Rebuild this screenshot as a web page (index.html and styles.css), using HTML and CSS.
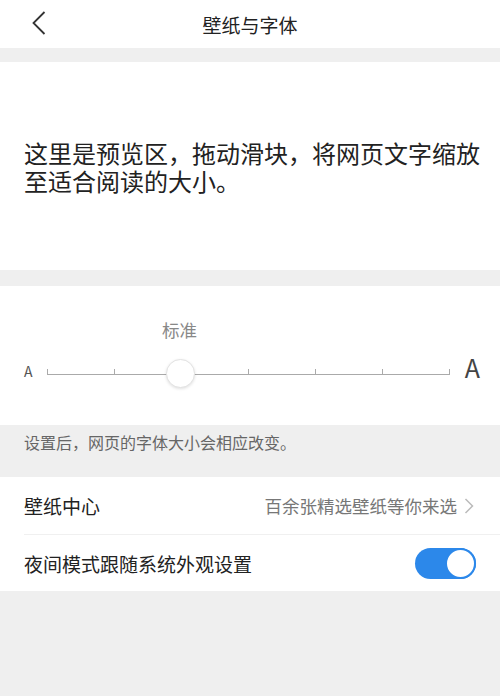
FILE: index.html
```html
<!DOCTYPE html>
<html lang="zh-CN">
<head>
    <meta charset="utf-8">
    <title>壁纸与字体</title>
    <link rel="stylesheet" href="styles.css">
</head>
<body>
    <div class="nav-bar">
        <span class="back">
            <svg width="14" height="24" viewBox="0 0 14 24"><path d="M12.5 1 L1.5 12 L12.5 23" fill="none" stroke="#333" stroke-width="1.8"/></svg>
        </span>
        <h1 class="nav-title">壁纸与字体</h1>
    </div>

    <div class="preview">
        <p>这里是预览区，拖动滑块，将网页文字缩放至适合阅读的大小。</p>
    </div>

    <div class="font-panel">
        <div class="level-label">标准</div>
        <div class="slider-row">
            <span class="a-small">A</span>
            <div class="track">
                <span class="tick"></span>
                <span class="tick"></span>
                <span class="tick"></span>
                <span class="tick"></span>
                <span class="tick"></span>
                <span class="tick"></span>
                <span class="tick"></span>
                <span class="thumb"></span>
            </div>
            <span class="a-big">A</span>
        </div>
    </div>

    <div class="hint">设置后，网页的字体大小会相应改变。</div>

    <div class="settings">
        <div class="row">
            <span class="row-title">壁纸中心</span>
            <span class="row-extra">百余张精选壁纸等你来选
                <svg width="10" height="16" viewBox="0 0 10 16"><path d="M1.5 1 L8.5 8 L1.5 15" fill="none" stroke="#bbb" stroke-width="1.5"/></svg>
            </span>
        </div>
        <div class="row">
            <span class="row-title">夜间模式跟随系统外观设置</span>
            <span class="switch on"><span class="knob"></span></span>
        </div>
    </div>
</body>
</html>
```

FILE: styles.css
```css
body {
    margin: 0;
    font-family: "Noto Sans CJK SC", "Noto Sans", sans-serif;
    background-color: #efefef;
    color: #222;
}

.nav-bar {
    height: 48px;
    background-color: #fff;
    display: flex;
    align-items: center;
    justify-content: center;
    position: relative;
    margin-bottom: 14px;
}

.back {
    position: absolute;
    left: 32px;
    top: 11px;
    display: flex;
}

.nav-title {
    margin: 0;
    font-size: 19px;
    font-weight: normal;
    color: #222;
}

.preview {
    background-color: #fff;
    height: 208px;
    padding: 77px 0 0 24px;
    box-sizing: border-box;
    margin-bottom: 16px;
}

.preview p {
    margin: 0;
    width: 462px;
    font-size: 24px;
    line-height: 28px;
    color: #222;
}

.font-panel {
    background-color: #fff;
    height: 139px;
    padding-top: 31px;
    box-sizing: border-box;
}

.level-label {
    margin-left: 162px;
    font-size: 17.5px;
    line-height: 26px;
    color: #888;
}

.slider-row {
    display: flex;
    align-items: center;
    padding: 0 20px 0 24px;
    margin-top: 7px;
    height: 40px;
}

.a-small {
    font-size: 14px;
    color: #555;
    width: 23px;
    margin-top: 2px;
}

.a-big {
    font-size: 25px;
    color: #444;
    margin-left: 15px;
    margin-top: -6px;
}

.track {
    flex: 1;
    height: 1px;
    background-color: #aaa;
    position: relative;
    display: flex;
    justify-content: space-between;
    margin-top: 9px;
}

.tick {
    width: 1px;
    height: 6px;
    background-color: #aaa;
    margin-top: -5px;
}

.thumb {
    position: absolute;
    left: 119px;
    top: -15px;
    width: 27px;
    height: 27px;
    border-radius: 50%;
    background-color: #fff;
    border: 1px solid #e2e2e2;
    box-shadow: 0 1px 3px rgba(0, 0, 0, 0.12);
}

.hint {
    height: 52px;
    padding: 5px 24px 0;
    box-sizing: border-box;
    font-size: 16px;
    line-height: 24px;
    color: #666;
}

.settings {
    background-color: #fff;
    padding-left: 24px;
}

.row {
    height: 56px;
    display: flex;
    align-items: center;
    justify-content: space-between;
    padding-right: 24px;
    border-bottom: 1px solid #f0f0f0;
}

.row:first-child {
    height: 57px;
}

.row:last-child {
    border-bottom: none;
}

.row-title {
    font-size: 19px;
    color: #222;
}

.row-extra {
    font-size: 17.5px;
    color: #777;
    display: flex;
    align-items: center;
    gap: 7px;
    margin-right: 2px;
}

.switch {
    width: 61px;
    height: 31px;
    border-radius: 16px;
    background-color: #ddd;
    display: flex;
    align-items: center;
    box-sizing: border-box;
}

.switch.on {
    background-color: #2c88ea;
    justify-content: flex-end;
}

.knob {
    width: 31px;
    height: 31px;
    border-radius: 50%;
    background-color: #fff;
    border: 2px solid #2c88ea;
    box-sizing: border-box;
}
```
